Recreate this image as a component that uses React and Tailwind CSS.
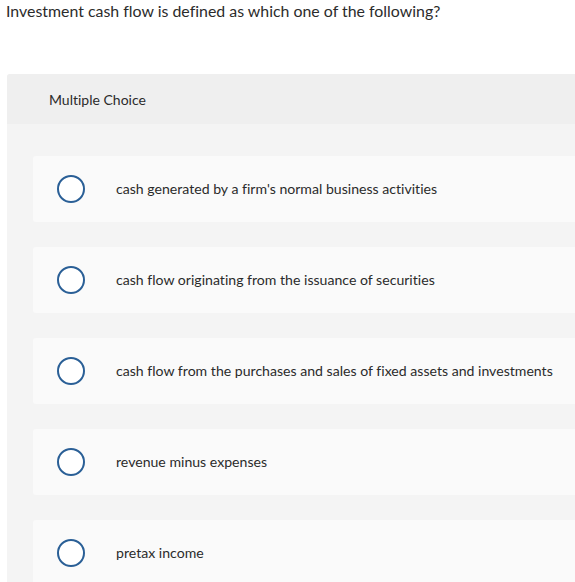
const options = [
  "cash generated by a firm's normal business activities",
  'cash flow originating from the issuance of securities',
  'cash flow from the purchases and sales of fixed assets and investments',
  'revenue minus expenses',
  'pretax income',
];

export default function App() {
  return (
    <div className="h-[582px] w-[575px] overflow-hidden bg-white font-['Lato','Open_Sans',sans-serif] text-[#2b2b2b] [font-variant-ligatures:none]">
      <h1 className="m-0 pl-[6px] pt-[1px] text-[15.9px] leading-[20px] font-normal">
        Investment cash flow is defined as which one of the following?
      </h1>

      <section className="mt-[53px] ml-[7px] rounded-tl-[3px] bg-[#f4f4f4]">
        <div className="flex h-[50px] items-center rounded-tl-[3px] bg-[#efefef] pl-[42px] text-[14px]">
          Multiple Choice
        </div>
        <div className="flex flex-col gap-[25px] pt-[32px] pl-[26px]">
          {options.map((text) => (
            <label
              key={text}
              className="flex h-[66px] items-center rounded-l-[3px] bg-[#fafafa] text-[14.1px]"
            >
              <span className="ml-[24px] h-[28px] w-[28px] shrink-0 rounded-full border-2 border-[#2a5f96] bg-white" />
              <span className="ml-[31px]">{text}</span>
            </label>
          ))}
        </div>
      </section>
    </div>
  );
}
